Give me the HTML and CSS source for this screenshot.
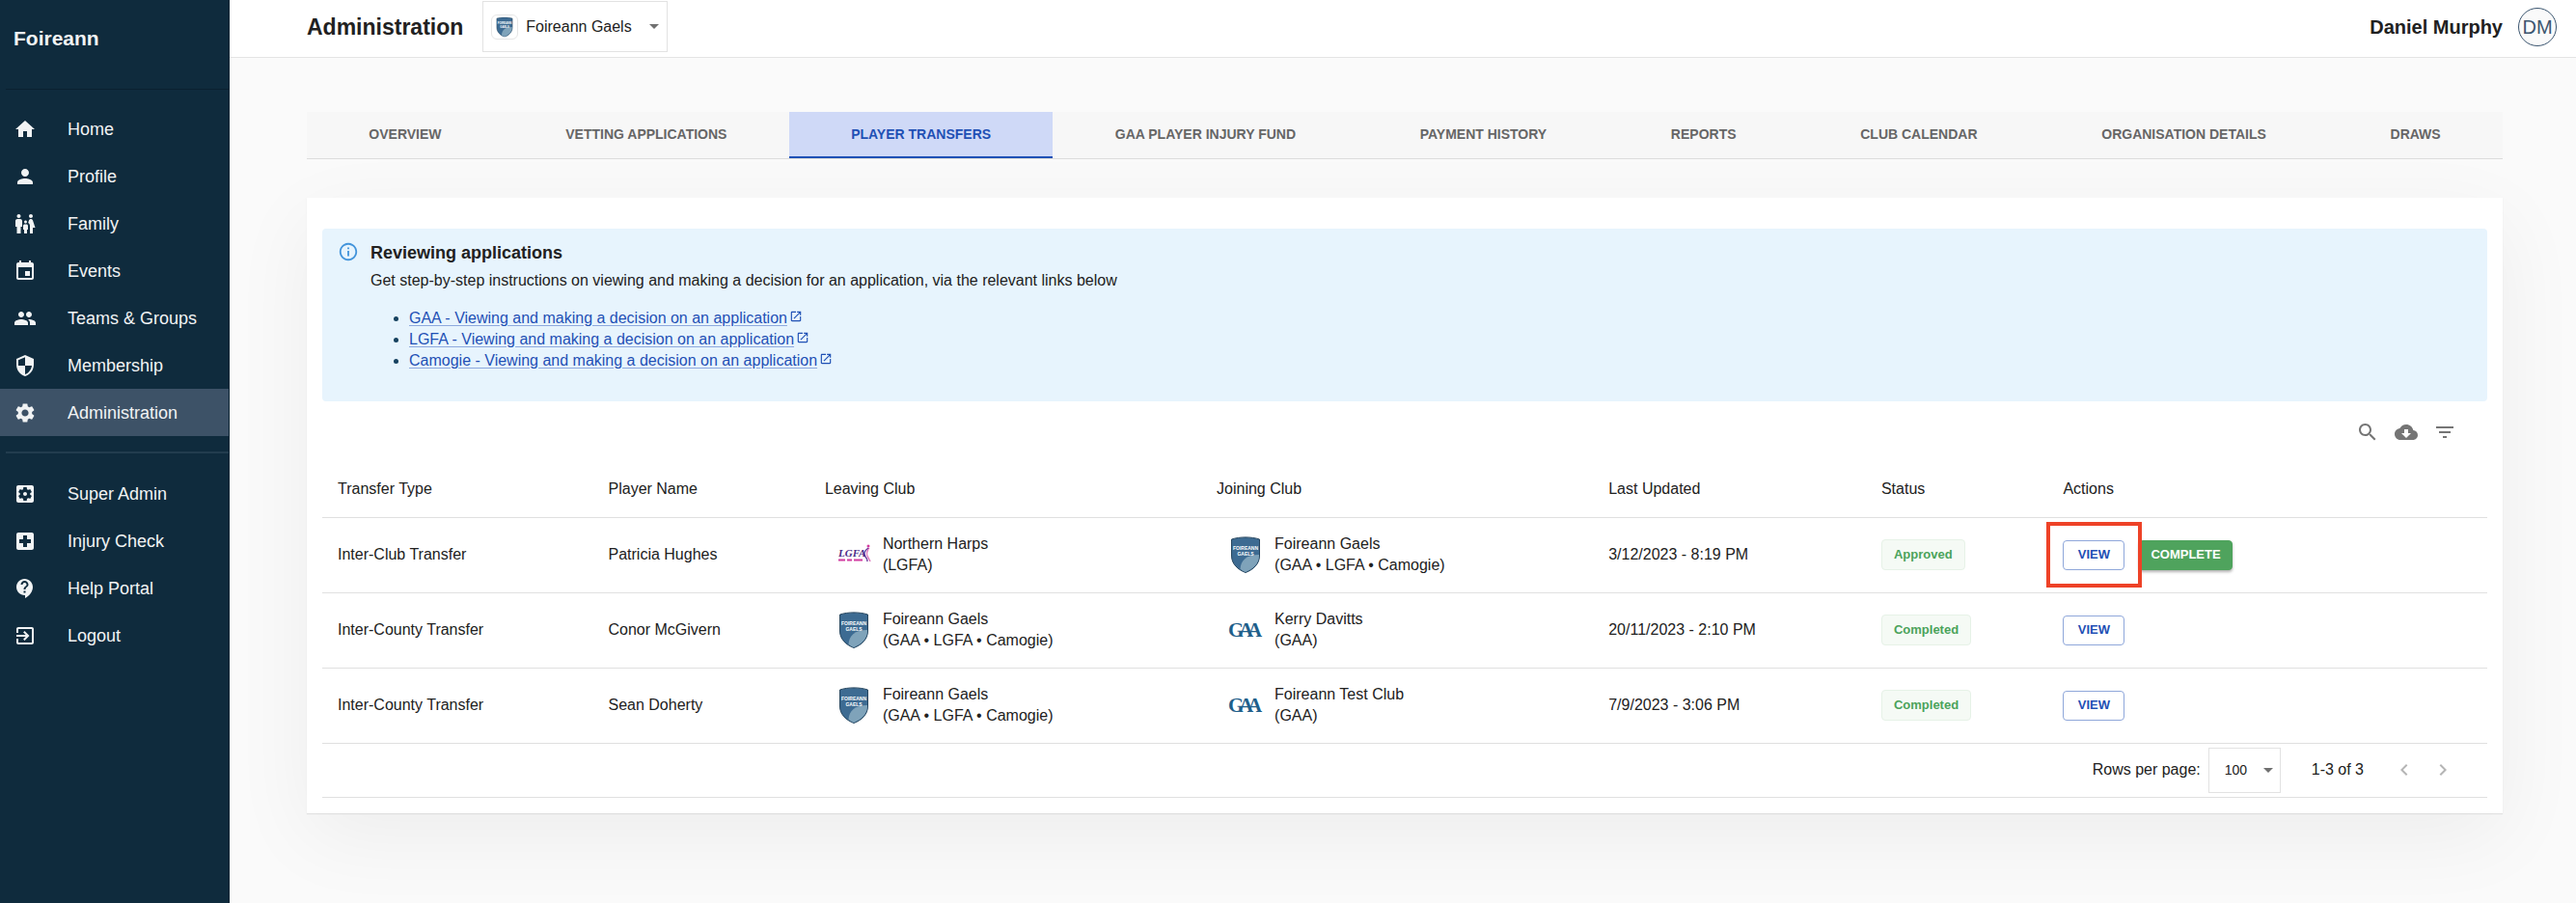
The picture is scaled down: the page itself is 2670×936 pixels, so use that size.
FILE: index.html
```
<!DOCTYPE html>
<html lang="en">
<head>
    <meta charset="UTF-8">
    <title>Foireann - Player Transfers</title>
    <link rel="stylesheet" href="styles.css">
</head>
<body>
<!-- shared icons -->
<svg class="sprite" aria-hidden="true">
    <symbol id="i-home" viewBox="0 0 24 24"><path d="M10 20v-6h4v6h5v-8h3L12 3 2 12h3v8z"/></symbol>
    <symbol id="i-person" viewBox="0 0 24 24"><path d="M12 12c2.21 0 4-1.79 4-4s-1.79-4-4-4-4 1.79-4 4 1.79 4 4 4zm0 2c-2.67 0-8 1.34-8 4v2h16v-2c0-2.66-5.33-4-8-4z"/></symbol>
    <symbol id="i-family" viewBox="0 0 24 24"><path d="M16 4c0-1.11.89-2 2-2s2 .89 2 2-.89 2-2 2-2-.89-2-2zm4 18v-6h2.5l-2.54-7.63C19.68 7.55 18.92 7 18.06 7h-.12c-.86 0-1.63.55-1.9 1.37l-.86 2.58c1.08.6 1.82 1.73 1.82 3.05v8h3zm-7.5-10.5c.83 0 1.5-.67 1.5-1.5s-.67-1.5-1.5-1.5S11 9.17 11 10s.67 1.5 1.5 1.5zM5.5 6c1.11 0 2-.89 2-2s-.89-2-2-2-2 .89-2 2 .89 2 2 2zm2 16v-7H9V9c0-1.1-.9-2-2-2H4c-1.1 0-2 .9-2 2v6h1.5v7h4zm6.5 0v-4h1v-4c0-.82-.68-1.5-1.5-1.5h-2c-.82 0-1.5.68-1.5 1.5v4h1v4h3z"/></symbol>
    <symbol id="i-event" viewBox="0 0 24 24"><path d="M17 12h-5v5h5v-5zM16 1v2H8V1H6v2H5c-1.11 0-1.99.9-1.99 2L3 19c0 1.1.89 2 2 2h14c1.1 0 2-.9 2-2V5c0-1.1-.9-2-2-2h-1V1h-2zm3 18H5V8h14v11z"/></symbol>
    <symbol id="i-people" viewBox="0 0 24 24"><path d="M16 11c1.66 0 2.99-1.34 2.99-3S17.66 5 16 5c-1.66 0-3 1.34-3 3s1.34 3 3 3zm-8 0c1.66 0 2.99-1.34 2.99-3S9.66 5 8 5C6.34 5 5 6.34 5 8s1.34 3 3 3zm0 2c-2.33 0-7 1.17-7 3.5V19h14v-2.5c0-2.33-4.67-3.5-7-3.5zm8 0c-.29 0-.62.02-.97.05 1.16.84 1.97 1.97 1.97 3.45V19h6v-2.5c0-2.33-4.67-3.5-7-3.5z"/></symbol>
    <symbol id="i-shield" viewBox="0 0 24 24"><path d="M12 1L3 5v6c0 5.55 3.84 10.74 9 12 5.16-1.26 9-6.45 9-12V5l-9-4zm0 10.99h7c-.53 4.12-3.28 7.79-7 8.94V12H5V6.3l7-3.11v8.8z"/></symbol>
    <symbol id="i-settings" viewBox="0 0 24 24"><path d="M19.14 12.94c.04-.3.06-.61.06-.94 0-.32-.02-.64-.07-.94l2.03-1.58c.18-.14.23-.41.12-.61l-1.92-3.32c-.12-.22-.37-.29-.59-.22l-2.39.96c-.5-.38-1.03-.7-1.62-.94L14.4 2.81c-.04-.24-.24-.41-.48-.41h-3.84c-.24 0-.43.17-.47.41L9.25 5.35C8.66 5.59 8.12 5.92 7.63 6.29L5.24 5.33c-.22-.08-.47 0-.59.22L2.74 8.87c-.12.21-.08.47.12.61l2.03 1.58C4.84 11.36 4.8 11.69 4.8 12s.02.64.07.94l-2.03 1.58c-.18.14-.23.41-.12.61l1.92 3.32c.12.22.37.29.59.22l2.39-.96c.5.38 1.03.7 1.62.94l.36 2.54c.05.24.24.41.48.41h3.84c.24 0 .44-.17.47-.41l.36-2.54c.59-.24 1.13-.56 1.62-.94l2.39.96c.22.08.47 0 .59-.22l1.92-3.32c.12-.22.07-.47-.12-.61l-2.01-1.58zM12 15.6c-1.98 0-3.6-1.62-3.6-3.6s1.62-3.6 3.6-3.6 3.6 1.62 3.6 3.6-1.62 3.6-3.6 3.6z"/></symbol>
    <symbol id="i-super" viewBox="0 0 24 24"><path d="M12 10c-1.1 0-2 .9-2 2s.9 2 2 2 2-.9 2-2-.9-2-2-2zm7-7H5c-1.11 0-2 .9-2 2v14c0 1.1.89 2 2 2h14c1.11 0 2-.9 2-2V5c0-1.1-.89-2-2-2zm-1.75 9c0 .23-.02.46-.05.68l1.48 1.16c.13.11.17.3.08.45l-1.4 2.42c-.09.15-.27.21-.43.15l-1.74-.7c-.36.28-.76.51-1.18.69l-.26 1.85c-.03.17-.18.3-.35.3h-2.8c-.17 0-.32-.13-.35-.29l-.26-1.85c-.43-.18-.82-.41-1.18-.69l-1.74.7c-.16.06-.34 0-.43-.15l-1.4-2.42c-.09-.15-.05-.34.08-.45l1.48-1.16c-.03-.23-.05-.46-.05-.69 0-.23.02-.46.05-.68l-1.48-1.16c-.13-.11-.17-.3-.08-.45l1.4-2.42c.09-.15.27-.21.43-.15l1.74.7c.36-.28.76-.51 1.18-.69l.26-1.85c.03-.17.18-.3.35-.3h2.8c.17 0 .32.13.35.29l.26 1.85c.43.18.82.41 1.18.69l1.74-.7c.16-.06.34 0 .43.15l1.4 2.42c.09.15.05.34-.08.45l-1.48 1.16c.03.23.05.46.05.69z"/></symbol>
    <symbol id="i-injury" viewBox="0 0 24 24"><path d="M19 3H5c-1.1 0-1.99.9-1.99 2L3 19c0 1.1.9 2 2 2h14c1.1 0 2-.9 2-2V5c0-1.1-.9-2-2-2zm-1 11h-4v4h-4v-4H6v-4h4V6h4v4h4v4z"/></symbol>
    <symbol id="i-help" viewBox="0 0 24 24"><path d="M11.5 2C6.81 2 3 5.81 3 10.5S6.81 19 11.5 19h.5v3c4.86-2.34 8-7 8-11.5C20 5.81 16.19 2 11.5 2zm1 14.5h-2v-2h2v2zm0-3.5h-2c0-3.25 3-3 3-5 0-1.1-.9-2-2-2s-2 .9-2 2h-2c0-2.21 1.79-4 4-4s4 1.79 4 4c0 2.5-3 2.75-3 5z"/></symbol>
    <symbol id="i-logout" viewBox="0 0 24 24"><path d="M10.09 15.59L11.5 17l5-5-5-5-1.41 1.41L12.67 11H3v2h9.67l-2.58 2.59zM19 3H5c-1.11 0-2 .9-2 2v4h2V5h14v14H5v-4H3v4c0 1.1.89 2 2 2h14c1.1 0 2-.9 2-2V5c0-1.1-.9-2-2-2z"/></symbol>
    <symbol id="i-search" viewBox="0 0 24 24"><path d="M15.5 14h-.79l-.28-.27C15.41 12.59 16 11.11 16 9.5 16 5.91 13.09 3 9.5 3S3 5.91 3 9.5 5.91 16 9.5 16c1.61 0 3.09-.59 4.23-1.57l.27.28v.79l5 4.99L20.49 19l-4.99-5zm-6 0C7.01 14 5 11.99 5 9.5S7.01 5 9.5 5 14 7.01 14 9.5 11.99 14 9.5 14z"/></symbol>
    <symbol id="i-download" viewBox="0 0 24 24"><path d="M19.35 10.04C18.67 6.59 15.64 4 12 4 9.11 4 6.6 5.64 5.35 8.04 2.34 8.36 0 10.91 0 14c0 3.31 2.69 6 6 6h13c2.76 0 5-2.24 5-5 0-2.64-2.05-4.78-4.65-4.96zM17 13l-5 5-5-5h3V9h4v4h3z"/></symbol>
    <symbol id="i-filter" viewBox="0 0 24 24"><path d="M10 18h4v-2h-4v2zM3 6v2h18V6H3zm3 7h12v-2H6v2z"/></symbol>
    <symbol id="i-info" viewBox="0 0 24 24"><path d="M11 9h2V7h-2v2zm1 11c-4.41 0-8-3.59-8-8s3.59-8 8-8 8 3.59 8 8-3.59 8-8 8zm0-18C6.48 2 2 6.48 2 12s4.48 10 10 10 10-4.48 10-10S17.52 2 12 2zm-1 15h2v-6h-2v6z"/></symbol>
    <symbol id="i-open" viewBox="0 0 24 24"><path d="M19 19H5V5h7V3H5c-1.11 0-2 .9-2 2v14c0 1.1.89 2 2 2h14c1.1 0 2-.9 2-2v-7h-2v7zM14 3v2h3.59l-9.83 9.83 1.41 1.41L19 6.41V10h2V3h-7z"/></symbol>
    <symbol id="i-left" viewBox="0 0 24 24"><path d="M15.41 16.59L10.83 12l4.58-4.59L14 6l-6 6 6 6z"/></symbol>
    <symbol id="i-right" viewBox="0 0 24 24"><path d="M8.59 16.59L13.17 12 8.59 7.41 10 6l6 6-6 6z"/></symbol>
    <symbol id="i-drop" viewBox="0 0 10 5"><path d="M0 0l5 5 5-5z"/></symbol>
    <symbol id="crest" viewBox="0 0 36 38">
        <path d="M3.5 3C12 .2 24 .2 32.5 3v17c0 8.500-6.500 14.500-14.500 17.500C10 34.500 3.500 28.500 3.500 20z" fill="#3d6b92" stroke="#26465f"/>
        <path d="M32 19v1c0 8-6.200 13.700-14 16.900-2.600-1-4-2-5.500-3.200C13 25 19 19 32 19z" fill="#7fa3ba"/>
    </symbol>
    <symbol id="figure" viewBox="0 0 36 38">
        <path d="M2 24.500h7M11 24.500h5M18 24.500h9" stroke="#d23aa0" stroke-width="2"/>
        <circle cx="33" cy="10" r="1.500" fill="#d23aa0"/>
        <path d="M33 12c-4 3-5 6-3 9 1.500 1.500 2 3 2 5" fill="none" stroke="#6a3a9c" stroke-width="1.500"/>
        <path d="M34 12c-3 4-3 7-1 10l2 4" fill="none" stroke="#d23aa0"/>
    </symbol>
</svg>

<div class="layout">
    <aside class="sidebar">
        <div class="brand">Foireann</div>
        <nav class="menu">
            <a href="#"><svg><use href="#i-home"/></svg>Home</a>
            <a href="#"><svg><use href="#i-person"/></svg>Profile</a>
            <a href="#"><svg><use href="#i-family"/></svg>Family</a>
            <a href="#"><svg><use href="#i-event"/></svg>Events</a>
            <a href="#"><svg><use href="#i-people"/></svg>Teams &amp; Groups</a>
            <a href="#"><svg><use href="#i-shield"/></svg>Membership</a>
            <a href="#" class="active"><svg><use href="#i-settings"/></svg>Administration</a>
        </nav>
        <hr class="divider">
        <nav class="menu">
            <a href="#"><svg><use href="#i-super"/></svg>Super Admin</a>
            <a href="#"><svg><use href="#i-injury"/></svg>Injury Check</a>
            <a href="#"><svg><use href="#i-help"/></svg>Help Portal</a>
            <a href="#"><svg><use href="#i-logout"/></svg>Logout</a>
        </nav>
    </aside>

    <div class="page">
        <header class="topbar">
            <h1>Administration</h1>
            <div class="select club-select">
                <span class="club-badge">
                    <svg viewBox="0 0 36 38"><use href="#crest"/><text x="18" y="14" class="crest-text">FOIREANN</text><text x="18" y="20" class="crest-text">GAELS</text></svg>
                </span>
                <select aria-label="Club">
                    <option>Foireann Gaels</option>
                </select>
                <svg class="drop"><use href="#i-drop"/></svg>
            </div>
            <div class="user">
                <span class="user-name">Daniel Murphy</span>
                <span class="avatar">DM</span>
            </div>
        </header>

        <main class="content">
            <nav class="tabs">
                <a href="#">OVERVIEW</a>
                <a href="#">VETTING APPLICATIONS</a>
                <a href="#" class="active">PLAYER TRANSFERS</a>
                <a href="#">GAA PLAYER INJURY FUND</a>
                <a href="#">PAYMENT HISTORY</a>
                <a href="#">REPORTS</a>
                <a href="#">CLUB CALENDAR</a>
                <a href="#">ORGANISATION DETAILS</a>
                <a href="#">DRAWS</a>
            </nav>

            <section class="card">
                <div class="alert">
                    <svg class="alert-icon"><use href="#i-info"/></svg>
                    <div>
                        <h2>Reviewing applications</h2>
                        <p>Get step-by-step instructions on viewing and making a decision for an application, via the relevant links below</p>
                        <ul>
                            <li><a href="#">GAA - Viewing and making a decision on an application</a><svg><use href="#i-open"/></svg></li>
                            <li><a href="#">LGFA - Viewing and making a decision on an application</a><svg><use href="#i-open"/></svg></li>
                            <li><a href="#">Camogie - Viewing and making a decision on an application</a><svg><use href="#i-open"/></svg></li>
                        </ul>
                    </div>
                </div>

                <div class="toolbar">
                    <button type="button" class="icon-btn" aria-label="Search"><svg><use href="#i-search"/></svg></button>
                    <button type="button" class="icon-btn" aria-label="Download"><svg><use href="#i-download"/></svg></button>
                    <button type="button" class="icon-btn" aria-label="Filter"><svg><use href="#i-filter"/></svg></button>
                </div>

                <table class="transfers">
                    <thead>
                    <tr>
                        <th class="col-type">Transfer Type</th>
                        <th class="col-name">Player Name</th>
                        <th class="col-club">Leaving Club</th>
                        <th class="col-club">Joining Club</th>
                        <th class="col-date">Last Updated</th>
                        <th class="col-status">Status</th>
                        <th>Actions</th>
                    </tr>
                    </thead>
                    <tbody>
                    <tr>
                        <td>Inter-Club Transfer</td>
                        <td>Patricia Hughes</td>
                        <td>
                            <div class="club">
                                <svg viewBox="0 0 36 38"><use href="#figure"/><text x="2" y="21" class="lgfa-text">LGFA</text></svg>
                                <div>Northern Harps<br>(LGFA)</div>
                            </div>
                        </td>
                        <td>
                            <div class="club">
                                <svg viewBox="0 0 36 38"><use href="#crest"/><text x="18" y="14" class="crest-text">FOIREANN</text><text x="18" y="20" class="crest-text">GAELS</text></svg>
                                <div>Foireann Gaels<br>(GAA • LGFA • Camogie)</div>
                            </div>
                        </td>
                        <td>3/12/2023 - 8:19 PM</td>
                        <td><span class="chip">Approved</span></td>
                        <td>
                            <div class="actions">
                                <span class="marked"><button type="button" class="btn">VIEW</button></span>
                                <button type="button" class="btn btn-green">COMPLETE</button>
                            </div>
                        </td>
                    </tr>
                    <tr>
                        <td>Inter-County Transfer</td>
                        <td>Conor McGivern</td>
                        <td>
                            <div class="club">
                                <svg viewBox="0 0 36 38"><use href="#crest"/><text x="18" y="14" class="crest-text">FOIREANN</text><text x="18" y="20" class="crest-text">GAELS</text></svg>
                                <div>Foireann Gaels<br>(GAA • LGFA • Camogie)</div>
                            </div>
                        </td>
                        <td>
                            <div class="club">
                                <svg viewBox="0 0 36 38"><text x="0 11 20" y="26" class="gaa-text">GAA</text></svg>
                                <div>Kerry Davitts<br>(GAA)</div>
                            </div>
                        </td>
                        <td>20/11/2023 - 2:10 PM</td>
                        <td><span class="chip">Completed</span></td>
                        <td><div class="actions"><button type="button" class="btn">VIEW</button></div></td>
                    </tr>
                    <tr>
                        <td>Inter-County Transfer</td>
                        <td>Sean Doherty</td>
                        <td>
                            <div class="club">
                                <svg viewBox="0 0 36 38"><use href="#crest"/><text x="18" y="14" class="crest-text">FOIREANN</text><text x="18" y="20" class="crest-text">GAELS</text></svg>
                                <div>Foireann Gaels<br>(GAA • LGFA • Camogie)</div>
                            </div>
                        </td>
                        <td>
                            <div class="club">
                                <svg viewBox="0 0 36 38"><text x="0 11 20" y="26" class="gaa-text">GAA</text></svg>
                                <div>Foireann Test Club<br>(GAA)</div>
                            </div>
                        </td>
                        <td>7/9/2023 - 3:06 PM</td>
                        <td><span class="chip">Completed</span></td>
                        <td><div class="actions"><button type="button" class="btn">VIEW</button></div></td>
                    </tr>
                    </tbody>
                </table>

                <div class="pager">
                    <label for="rows">Rows per page:</label>
                    <div class="select rows-select">
                        <select id="rows">
                            <option>100</option>
                        </select>
                        <svg class="drop"><use href="#i-drop"/></svg>
                    </div>
                    <span class="range">1-3 of 3</span>
                    <button type="button" class="icon-btn" aria-label="Previous page" disabled><svg><use href="#i-left"/></svg></button>
                    <button type="button" class="icon-btn" aria-label="Next page" disabled><svg><use href="#i-right"/></svg></button>
                </div>
            </section>
        </main>
    </div>
</div>
</body>
</html>
```
FILE: styles.css
```
*{box-sizing: border-box;margin: 0;padding: 0;}
body{font: 16px/22px "Liberation Sans", Arial, sans-serif;color: #212121;background: #fafafa;}
a{text-decoration: none;color: inherit;}
button,select{font-family: inherit;cursor: pointer;}
svg{display: block;flex: none;fill: currentColor;}
.sprite{position: absolute;width: 0;height: 0;}
.layout{display: flex;min-height: 100vh;}

/* sidebar */
.sidebar{flex: none;width: 238px;background: #0f2b3d;border-right: 1px solid #0a2232;color: #f1f3f4;}
.brand{height: 93px;margin-left: 6px;padding: 28px 8px;border-bottom: 1px solid #0a2030;font-size: 21px;line-height: 24px;font-weight: bold;}
.menu{padding-top: 17px;}
.menu a{display: flex;align-items: center;gap: 32px;height: 49px;padding: 0 14px;font-size: 18px;line-height: 24px;}
.menu svg{width: 24px;height: 24px;}
.menu .active{background: #3d5267;}
.brand + .menu{padding-top: 16px;}
.divider{height: 2px;margin: 16px 0 0 6px;border: 0;background: #223c4e;}

/* top bar */
.page{flex: 1;min-width: 0;}
.topbar{display: flex;align-items: center;height: 60px;padding: 0 20px 4px 80px;background: #fff;border-bottom: 1px solid #e4e4e4;}
.topbar h1{font-size: 23px;line-height: 28px;}
.select{display: flex;align-items: center;border: 1px solid #e2e2e2;background: #fff;}
.select select{border: 0;outline: 0;background: none;appearance: none;color: #212121;}
.drop{width: 10px;height: 5px;color: #707070;}
.club-select{height: 53px;margin-left: 20px;padding: 0 8px;}
.club-select select{width: 128px;margin-left: 8px;font-size: 16px;}
.club-badge{padding: 1px 3px;border: 1px solid #e6e6e6;border-radius: 6px;}
.club-badge svg{width: 20px;height: 22px;}
.user{display: flex;align-items: center;gap: 16px;margin-left: auto;}
.user-name{font-size: 20px;font-weight: bold;}
.avatar{width: 40px;height: 40px;border: 1px solid #3c5670;border-radius: 50%;background: #fafafa;color: #3c5670;font-size: 20px;line-height: 38px;text-align: center;}

/* tabs */
.content{padding: 56px 76px 94px 80px;}
.tabs{display: flex;height: 49px;background: #f7f7f7;border-bottom: 1px solid #dcdcdc;}
.tabs a{flex: 1 1 auto;padding: 0 16px;border-bottom: 2px solid transparent;font-size: 14px;line-height: 46px;font-weight: bold;text-align: center;color: #666;}
.tabs .active{border-color: #1f50b5;background: #cfd9f7;color: #1f50b5;}

/* card */
.card{margin-top: 40px;padding: 32px 16px 16px;background: #fff;box-shadow: 0 1px 1px rgba(0,0,0,.08), 0 24px 80px rgba(0,0,0,.055);}
.alert{display: flex;gap: 12px;padding: 13px 16px 31px;border-radius: 4px;background: #e7f4fd;}
.alert-icon{width: 22px;height: 22px;color: #4394db;}
.alert h2{font-size: 18px;line-height: 24px;}
.alert p{margin-top: 6px;}
.alert ul{margin-top: 17px;padding-left: 40px;color: #174260;}
.alert li a{color: #1f50b5;text-decoration: underline;text-decoration-color: #8ea9de;text-underline-offset: 2px;}
.alert li svg{display: inline-block;width: 14px;height: 14px;margin-left: 2px;color: #1f50b5;}
.toolbar{display: flex;align-items: center;justify-content: flex-end;gap: 16px;height: 63px;padding: 0 32px;}
.icon-btn{border: 0;background: none;color: #757575;}
.icon-btn svg{width: 24px;height: 24px;}

/* table */
.transfers{width: 100%;border-collapse: collapse;table-layout: fixed;text-align: left;}
.transfers th,.transfers td{height: 78px;padding: 0 16px;border-bottom: 1px solid #e0e0e0;}
.transfers th{height: 57px;font-weight: normal;}
.col-type{width: 12.5%;}
.col-name{width: 10%;}
.col-club{width: 18.1%;}
.col-date{width: 12.6%;}
.col-status{width: 8.4%;}
.club{display: flex;align-items: center;gap: 12px;padding-left: 12px;}
.club svg{width: 36px;height: 38px;}
.crest-text{font: bold 5px "Liberation Sans", sans-serif;text-anchor: middle;fill: #fff;}
.gaa-text{font: bold 21px "Liberation Serif", serif;fill: #1f5f8b;}
.lgfa-text{font: italic bold 11px "Liberation Serif", serif;fill: #4a2a86;}
.chip{display: inline-block;padding: 0 12px;border: 1px solid #e6f2e7;border-radius: 4px;background: #f5faf5;color: #4ba35b;font-size: 13px;line-height: 30px;font-weight: bold;}
.actions{display: flex;gap: 15px;}
.btn{display: block;min-width: 64px;height: 31px;padding: 0 11px 1px;border: 1px solid #8fa7da;border-radius: 4px;background: #fff;color: #1f50b5;font-size: 13px;font-weight: bold;}
.btn-green{border-color: #4fa35d;background: #4fa35d;color: #fff;box-shadow: 0 2px 3px rgba(0,0,0,.3);}
.marked{position: relative;}
.marked:after{content: "";position: absolute;z-index: 1;top: -19px;right: -18px;bottom: -18px;left: -17px;border: 4px solid #ee4227;pointer-events: none;}

/* pager */
.pager{display: flex;align-items: center;justify-content: flex-end;height: 56px;padding: 0 34px;border-bottom: 1px solid #e0e0e0;}
.rows-select{height: 47px;margin: 0 32px 0 8px;padding: 0 7px 0 16px;}
.rows-select select{width: 40px;font-size: 14px;}
.range{margin-right: 30px;}
.pager .icon-btn{color: #b5b5b5;}
.pager .icon-btn + .icon-btn{margin-left: 16px;}
```
